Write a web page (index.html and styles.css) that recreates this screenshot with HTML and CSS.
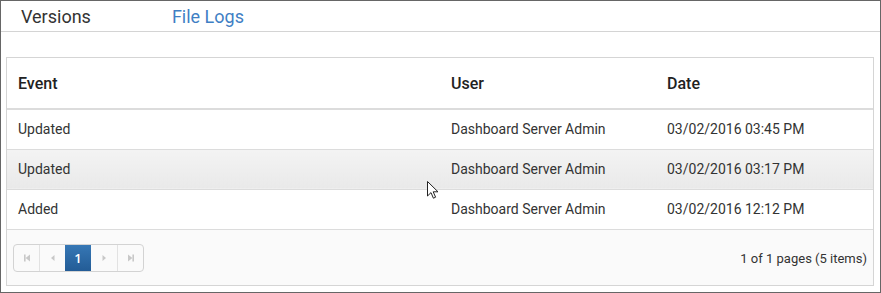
FILE: index.html
```html
<!DOCTYPE html>
<html lang="en">
<head>
  <meta charset="UTF-8" />
  <title>File Logs</title>
  <link rel="stylesheet" href="styles.css">
</head>
<body>
  <div class="frame">
    <div class="tabs">
      <a href="#" class="tab">Versions</a>
      <a href="#" class="tab active">File Logs</a>
    </div>

    <div class="content">
      <div class="grid">
        <table>
          <colgroup>
            <col class="c-event">
            <col class="c-user">
            <col class="c-date">
          </colgroup>
          <thead>
            <tr>
              <th>Event</th>
              <th>User</th>
              <th>Date</th>
            </tr>
          </thead>
          <tbody>
            <tr>
              <td>Updated</td>
              <td>Dashboard Server Admin</td>
              <td>03/02/2016 03:45 PM</td>
            </tr>
            <tr class="hover">
              <td>Updated</td>
              <td>Dashboard Server Admin</td>
              <td>03/02/2016 03:17 PM</td>
            </tr>
            <tr>
              <td>Added</td>
              <td>Dashboard Server Admin</td>
              <td>03/02/2016 12:12 PM</td>
            </tr>
          </tbody>
        </table>

        <div class="pager">
          <div class="pager-nav">
            <a href="#" class="pbtn">
              <svg width="10" height="10" viewBox="0 0 10 10"><rect x="2" y="1.5" width="1.6" height="7" fill="#c8c8c8"/><path d="M8 1.5 L3.6 5 L8 8.5 Z" fill="#c8c8c8"/></svg>
            </a>
            <a href="#" class="pbtn">
              <svg width="10" height="10" viewBox="0 0 10 10"><path d="M6.5 2 L3 5 L6.5 8 Z" fill="#c8c8c8"/></svg>
            </a>
            <span class="pbtn current">1</span>
            <a href="#" class="pbtn">
              <svg width="10" height="10" viewBox="0 0 10 10"><path d="M3.5 2 L7 5 L3.5 8 Z" fill="#c8c8c8"/></svg>
            </a>
            <a href="#" class="pbtn">
              <svg width="10" height="10" viewBox="0 0 10 10"><path d="M2 1.5 L6.4 5 L2 8.5 Z" fill="#c8c8c8"/><rect x="6.4" y="1.5" width="1.6" height="7" fill="#c8c8c8"/></svg>
            </a>
          </div>
          <span class="pager-info">1 of 1 pages (5 items)</span>
        </div>
      </div>
    </div>

    <svg class="cursor" width="12" height="19" viewBox="0 0 12 19">
      <path d="M0.5 0.5 L0.5 15 L4 11.6 L6.4 17.2 L8.6 16.2 L6.2 10.8 L11 10.8 Z" fill="#fff" stroke="#222" stroke-width="1"/>
    </svg>
  </div>
</body>
</html>
```

FILE: styles.css
```css
* {
  box-sizing: border-box;
}
body {
  margin: 0;
  padding: 0;
  font-family: Roboto, 'Liberation Sans', Arial, sans-serif;
  background: #fff;
  color: #333;
}
.frame {
  position: relative;
  width: 881px;
  height: 293px;
  border: 1px solid #666;
  background: #fff;
}
.tabs {
  display: flex;
  height: 31px;
  border-bottom: 1px solid #d4d4d4;
  padding-left: 20px;
}
.tab {
  font-size: 18px;
  line-height: 32px;
  color: #333;
  text-decoration: none;
  margin-right: 81px;
}
.tab.active {
  color: #3f7fc4;
}
.content {
  padding: 25px 6px 0 5px;
}
.grid {
  border: 1px solid #d5d5d5;
}
table {
  width: 100%;
  border-collapse: collapse;
  table-layout: fixed;
}
.c-event {
  width: 433px;
}
.c-user {
  width: 216px;
}
th {
  height: 51px;
  text-align: left;
  font-weight: 500;
  font-size: 16px;
  color: #222;
  padding: 0 11px;
  border-bottom: 2px solid #dcdcdc;
}
td {
  height: 40px;
  font-size: 14px;
  color: #333;
  padding: 0 11px;
  border-bottom: 1px solid #dcdcdc;
  white-space: nowrap;
}
tr.hover td {
  background: linear-gradient(to bottom, #f3f3f3, #e9e9e9);
}
.pager {
  display: flex;
  align-items: center;
  justify-content: space-between;
  height: 55px;
  background: #fafafa;
  padding: 2px 6px 0 6px;
}
.pager-nav {
  display: flex;
  height: 28px;
  border: 1px solid #d3d3d3;
  border-radius: 4px;
  background: #fafafa;
  overflow: hidden;
}
.pbtn {
  display: flex;
  align-items: center;
  justify-content: center;
  width: 26px;
  border-left: 1px solid #e2e2e2;
  text-decoration: none;
}
.pbtn:first-child {
  border-left: none;
  width: 25px;
}
.pbtn.current {
  border-left: none;
  background: linear-gradient(to bottom, #3677b5, #235c96);
  color: #fff;
  font-family: 'Open Sans', sans-serif;
  font-size: 13px;
  font-weight: 600;
}
.pbtn.current + .pbtn {
  border-left: none;
}
.pager-info {
  font-size: 13px;
  color: #333;
}
.cursor {
  position: absolute;
  left: 426px;
  top: 180px;
}
```
